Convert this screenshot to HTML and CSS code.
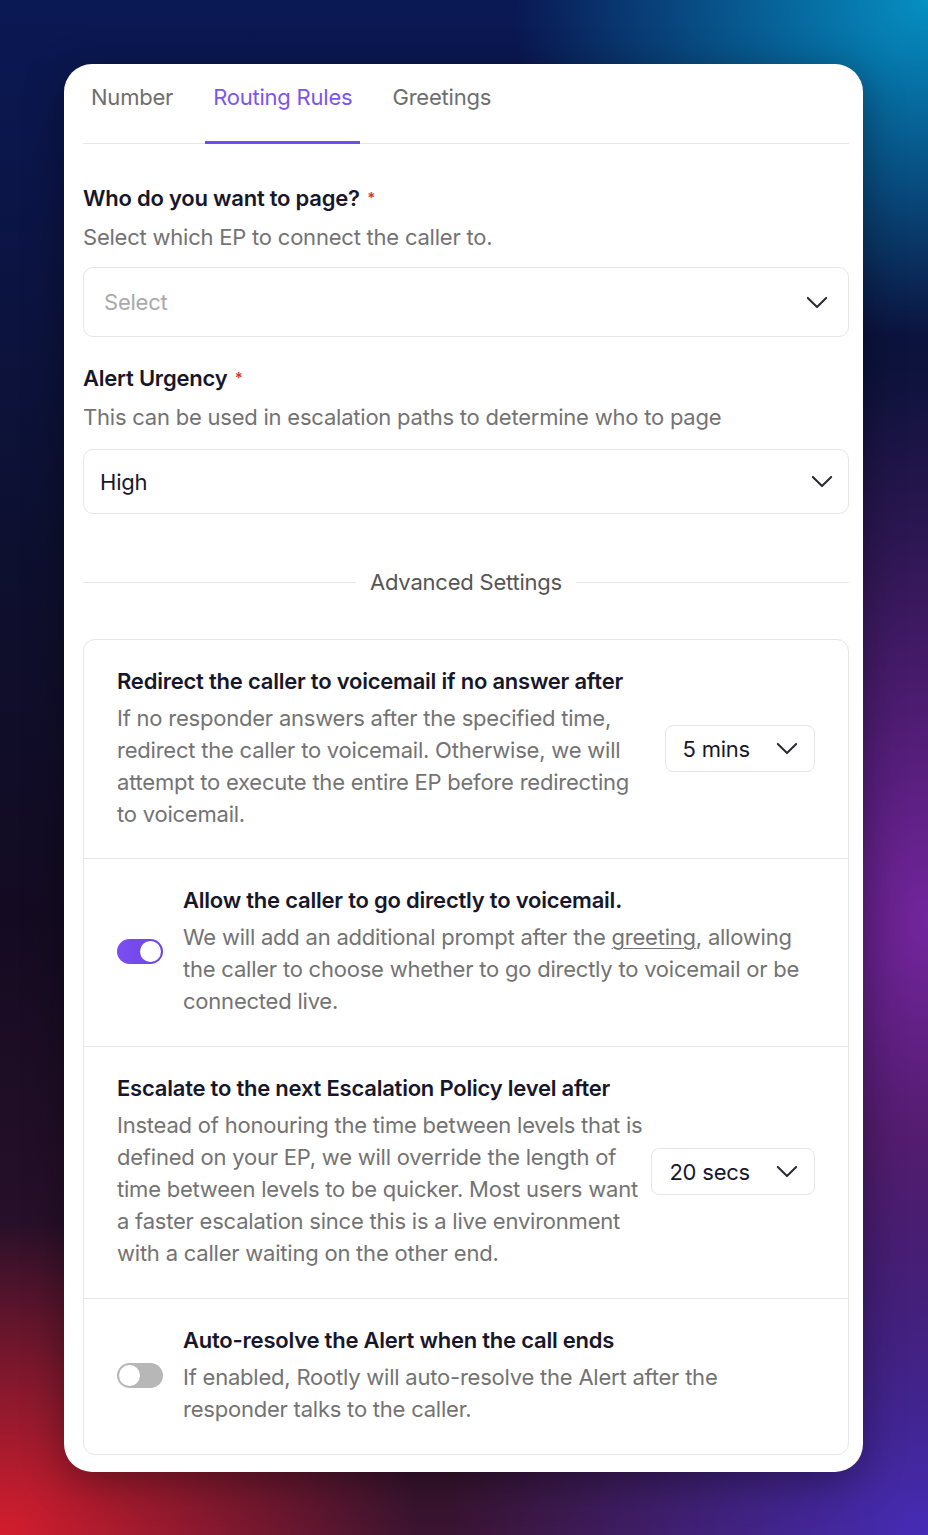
FILE: index.html
```html
<!DOCTYPE html>
<html lang="en">

<head>
    <meta charset="UTF-8">
    <meta name="viewport" content="width=device-width, initial-scale=1.0">
    <title>Routing Rules</title>

    <link rel="stylesheet" href="styles.css">
</head>

<body>
    <main class="card">
        <nav class="tabs">
            <span class="tab">Number</span>
            <span class="tab tab-active">Routing Rules</span>
            <span class="tab">Greetings</span>
        </nav>

        <div class="field">
            <div class="field-label">Who do you want to page? <span class="req">*</span></div>
            <div class="field-help">Select which EP to connect the caller to.</div>
            <div class="select select-empty">
                <span class="select-value">Select</span>
                <svg class="chevron" viewBox="0 0 24 14">
                    <path d="M2 2l10 10L22 2" />
                </svg>
            </div>
        </div>

        <div class="field">
            <div class="field-label">Alert Urgency <span class="req">*</span></div>
            <div class="field-help">This can be used in escalation paths to determine who to page</div>
            <div class="select select-filled">
                <span class="select-value">High</span>
                <svg class="chevron" viewBox="0 0 24 14">
                    <path d="M2 2l10 10L22 2" />
                </svg>
            </div>
        </div>

        <div class="divider">
            <span>Advanced Settings</span>
        </div>

        <section class="settings">
            <div class="setting">
                <div class="setting-body setting-body-narrow">
                    <div class="setting-title">Redirect the caller to voicemail if no answer after</div>
                    <p class="setting-text">If no responder answers after the specified time, redirect the caller to voicemail. Otherwise, we will attempt to execute the entire EP before redirecting to voicemail.</p>
                </div>
                <div class="mini-select">
                    <span>5 mins</span>
                    <svg class="chevron" viewBox="0 0 24 14">
                        <path d="M2 2l10 10L22 2" />
                    </svg>
                </div>
            </div>

            <div class="setting">
                <span class="toggle toggle-on"></span>
                <div class="setting-body">
                    <div class="setting-title">Allow the caller to go directly to voicemail.</div>
                    <p class="setting-text">We will add an additional prompt after the <span class="link">greeting</span>, allowing the caller to choose whether to go directly to voicemail or be connected live.</p>
                </div>
            </div>

            <div class="setting">
                <div class="setting-body setting-body-narrow">
                    <div class="setting-title">Escalate to the next Escalation Policy level after</div>
                    <p class="setting-text">Instead of honouring the time between levels that is defined on your EP, we will override the length of time between levels to be quicker. Most users want a faster escalation since this is a live environment with a caller waiting on the other end.</p>
                </div>
                <div class="mini-select">
                    <span>20 secs</span>
                    <svg class="chevron" viewBox="0 0 24 14">
                        <path d="M2 2l10 10L22 2" />
                    </svg>
                </div>
            </div>

            <div class="setting">
                <span class="toggle"></span>
                <div class="setting-body">
                    <div class="setting-title">Auto-resolve the Alert when the call ends</div>
                    <p class="setting-text">If enabled, Rootly will auto-resolve the Alert after the responder talks to the caller.</p>
                </div>
            </div>
        </section>
    </main>
</body>

</html>
```

FILE: styles.css
```css
* {
    box-sizing: border-box;

    --ink: #17172b;
    --muted: #737373;
    --line: #e6e6e6;
    --purple: #6f4df2;
}

body {
    margin: 0;
    height: 1535px;
    overflow: hidden;
    padding: 64px 65px 0 64px;
    font-family: Inter, "Noto Sans", sans-serif;
    font-size: 22px;
    letter-spacing: -0.01em;
    background:
        radial-gradient(ellipse 560px 420px at 0% 100%, rgba(220, 30, 45, 0.95), transparent 75%),
        radial-gradient(ellipse 600px 500px at 100% 100%, rgba(70, 45, 190, 0.95), transparent 80%),
        radial-gradient(ellipse 500px 700px at 100% 60%, rgba(125, 40, 170, 0.9), transparent 80%),
        radial-gradient(ellipse 520px 420px at 100% 0%, rgba(5, 150, 200, 0.95), transparent 80%),
        linear-gradient(to bottom, #0a1854 0%, #0d1030 35%, #140b22 60%, #3a1430 100%);
}

.card {
    background: #fff;
    border-radius: 28px;
    padding: 0 14px 17px 19px;
    box-shadow: 0 10px 40px rgba(0, 0, 0, 0.35);
}

/* tabs */

.tabs {
    display: flex;
    gap: 24px;
    border-bottom: 1px solid var(--line);
}

.tab {
    line-height: 28px;
    color: #6e6e6e;
    padding: 19px 8px 30px;
    border-bottom: 3px solid transparent;
    margin-bottom: -1px;
}

.tab-active {
    color: #7a55f0;
    border-bottom-color: var(--purple);
}

/* fields */

.field {
    margin-top: 40px;
}

.field + .field {
    margin-top: 27px;
}

.field-label {
    line-height: 28px;
    font-weight: 600;
    color: var(--ink);
}

.req {
    color: #d6303d;
    font-size: 15px;
    vertical-align: top;
    margin-left: 2px;
}

.field-help {
    margin-top: 11px;
    line-height: 28px;
    color: var(--muted);
}

.select {
    display: flex;
    align-items: center;
    justify-content: space-between;
    border: 1px solid var(--line);
    border-radius: 10px;
}

.select-empty {
    margin-top: 16px;
    height: 70px;
    padding: 0 20px 0 20px;
    color: #a9a9a9;
}

.select-filled {
    margin-top: 18px;
    height: 65px;
    padding: 0 15px 0 16px;
    color: var(--ink);
}

.chevron {
    width: 22px;
    height: 13px;
    fill: none;
    stroke: #2a2a36;
    stroke-width: 2.2;
    stroke-linecap: round;
    stroke-linejoin: round;
}

/* advanced divider */

.divider {
    display: flex;
    align-items: center;
    gap: 14px;
    margin-top: 54px;
    line-height: 28px;
    color: #555;
}

.divider::before,
.divider::after {
    content: "";
    flex: 1;
    border-top: 1px solid var(--line);
}

/* settings box */

.settings {
    margin-top: 43px;
    border: 1px solid var(--line);
    border-radius: 12px;
}

.setting {
    display: flex;
    align-items: center;
    gap: 6px;
    padding: 27px 33px 28px 33px;
}

.setting + .setting {
    border-top: 1px solid var(--line);
    padding-bottom: 29px;
}

.setting-body {
    flex: 1;
    max-width: 625px;
}

.setting-body-narrow {
    max-width: 528px;
}

.toggle + .setting-body {
    margin-left: 14px;
}

.setting-title {
    line-height: 28px;
    font-weight: 600;
    color: var(--ink);
}

.setting-text {
    margin: 7px 0 0;
    line-height: 32px;
    color: var(--muted);
}

.link {
    text-decoration: underline;
    text-underline-offset: 3px;
    text-decoration-thickness: 1px;
}

.mini-select {
    display: flex;
    align-items: center;
    gap: 26px;
    height: 47px;
    margin-left: auto;
    padding: 0 16px 0 17px;
    border: 1px solid var(--line);
    border-radius: 8px;
    color: var(--ink);
}

/* toggles */

.toggle {
    position: relative;
    flex: none;
    width: 46px;
    height: 25px;
    border-radius: 13px;
    background: #b7b7b7;
}

.toggle::after {
    content: "";
    position: absolute;
    top: 2px;
    left: 2px;
    width: 21px;
    height: 21px;
    border-radius: 50%;
    background: #fff;
}

.toggle-on {
    background: linear-gradient(to right, #7b4ef0, #6a45ec);
}

.toggle-on::after {
    left: 23px;
}
```
